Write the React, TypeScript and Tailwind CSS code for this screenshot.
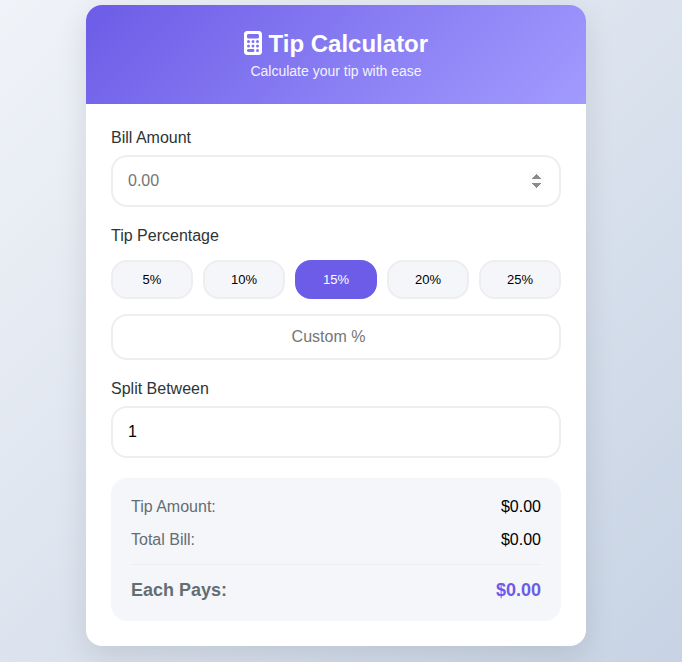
import { useState } from "react";
import type { InputHTMLAttributes, ReactNode } from "react";
import { FaCalculator } from "react-icons/fa6";
import { twMerge } from "tailwind-merge";

const PRESETS = [5, 10, 15, 20, 25];

const money = (value: number) => `$${value.toFixed(2)}`;

function NumberField({ className, ...props }: InputHTMLAttributes<HTMLInputElement>) {
  return (
    <input
      type="number"
      className={twMerge(
        "block w-full rounded-2xl border-2 border-[#eeeeee] bg-white p-[15px] text-base leading-[18px] text-black outline-none placeholder:text-[#757575] focus:border-[#6c5ce7]",
        className,
      )}
      {...props}
    />
  );
}

function ResultRow({ label, children }: { label: string; children: ReactNode }) {
  return (
    <div className="flex justify-between leading-[18px]">
      <dt className="text-[#636e72]">{label}</dt>
      <dd className="text-black">{children}</dd>
    </div>
  );
}

export default function App() {
  const [bill, setBill] = useState("");
  const [preset, setPreset] = useState<number | null>(15);
  const [custom, setCustom] = useState("");
  const [people, setPeople] = useState("1");

  const amount = Number(bill) || 0;
  const percent = preset ?? (Number(custom) || 0);
  const tip = (amount * percent) / 100;
  const total = amount + tip;
  const share = total / Math.max(1, Number(people) || 1);

  return (
    <div className="min-h-screen bg-linear-[135deg,#f0f3f8_0%,#c7d3e4_100%] pt-[5px] pr-[10px] pb-4 font-['Liberation_Sans',Arial,sans-serif] text-base text-[#2d3436]">
      <main className="mx-auto w-full max-w-[500px] overflow-hidden rounded-2xl bg-white shadow-[0_10px_30px_rgba(0,0,0,0.1)]">
        <header className="bg-linear-[135deg,#6c5ce7,#a29bfe] p-[25px] text-center text-white">
          <h1 className="mb-[5px] text-2xl leading-7 font-bold">
            <FaCalculator className="inline-block h-6 w-[18px] align-[-3px]" aria-hidden="true" />{" "}
            Tip Calculator
          </h1>
          <p className="text-sm leading-4 opacity-90">Calculate your tip with ease</p>
        </header>

        <form className="flex flex-col gap-5 p-[25px]" onSubmit={(e) => e.preventDefault()}>
          <div>
            <label htmlFor="bill" className="mb-2 block leading-[18px]">
              Bill Amount
            </label>
            <NumberField
              id="bill"
              min="0"
              step="0.01"
              placeholder="0.00"
              value={bill}
              onChange={(e) => setBill(e.target.value)}
              className="[&::-webkit-inner-spin-button]:opacity-100"
            />
          </div>

          <div className="flex flex-col gap-[15px]">
            <label htmlFor="custom" className="block leading-[18px]">
              Tip Percentage
            </label>
            <div className="grid grid-cols-5 gap-[10px]">
              {PRESETS.map((value) => (
                <button
                  key={value}
                  type="button"
                  aria-pressed={preset === value}
                  onClick={() => {
                    setPreset(value);
                    setCustom("");
                  }}
                  className={twMerge(
                    "rounded-2xl border-2 border-[#eeeeee] bg-[#f5f6fa] py-[10px] text-[13px] leading-[15px] font-medium text-black",
                    preset === value && "border-[#6c5ce7] bg-[#6c5ce7] text-white",
                  )}
                >
                  {value}%
                </button>
              ))}
            </div>
            <NumberField
              id="custom"
              min="0"
              placeholder="Custom %"
              value={custom}
              onChange={(e) => {
                setCustom(e.target.value);
                setPreset(null);
              }}
              className="py-3 text-center"
            />
          </div>

          <div>
            <label htmlFor="people" className="mb-2 block leading-[18px]">
              Split Between
            </label>
            <NumberField
              id="people"
              min="1"
              value={people}
              onChange={(e) => setPeople(e.target.value)}
            />
          </div>

          <dl className="flex flex-col gap-[15px] rounded-2xl bg-[#f5f6fa] p-5">
            <ResultRow label="Tip Amount:">{money(tip)}</ResultRow>
            <ResultRow label="Total Bill:">{money(total)}</ResultRow>
            <div className="flex justify-between border-t border-[#eeeeee] pt-[15px] text-lg leading-[21px] font-bold">
              <dt className="text-[#636e72]">Each Pays:</dt>
              <dd className="text-[#6c5ce7]">{money(share)}</dd>
            </div>
          </dl>
        </form>
      </main>
    </div>
  );
}
